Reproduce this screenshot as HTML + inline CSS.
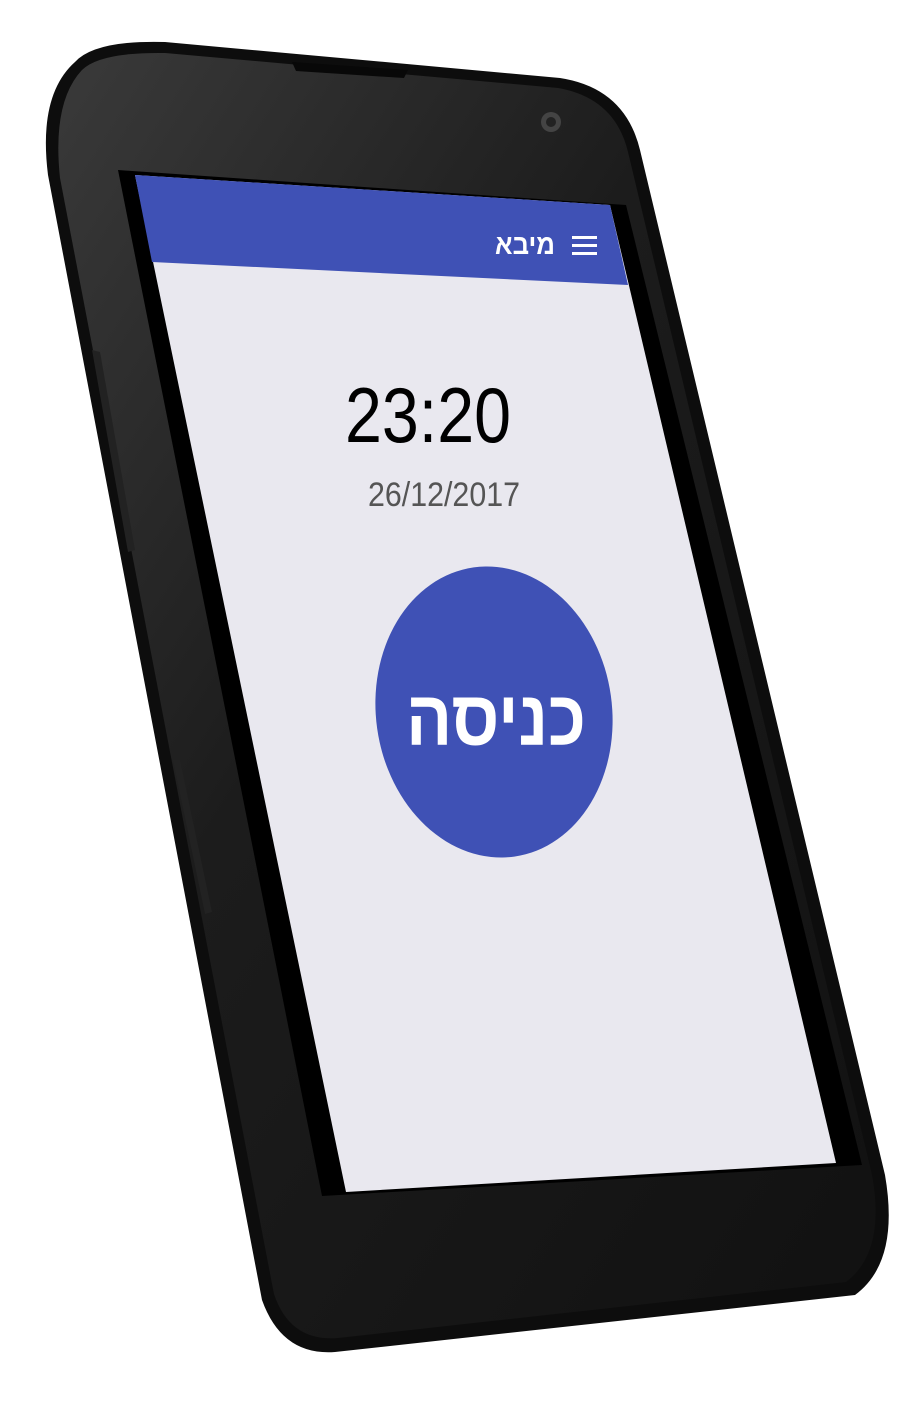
<!DOCTYPE html>
<html><head><meta charset="utf-8"><style>
html,body{margin:0;padding:0;background:#fff;}
svg{display:block}
</style></head><body>
<svg width="923" height="1412" viewBox="0 0 923 1412" xmlns="http://www.w3.org/2000/svg">
<defs>
<linearGradient id="body" x1="0" y1="0" x2="1" y2="1">
<stop offset="0" stop-color="#3a3a3a"/><stop offset="0.4" stop-color="#1c1c1c"/><stop offset="1" stop-color="#111"/>
</linearGradient>
</defs>
<path d="M75 62 Q95 40 165 42 L560 78 Q625 88 640 150 L885 1175 Q900 1262 855 1295 L335 1352 Q282 1356 262 1300 L48 175 Q38 95 75 62 Z" fill="#0d0d0d"/>
<path d="M82 70 Q100 52 165 53 L558 88 Q615 98 628 152 L872 1175 Q886 1252 846 1282 L338 1338 Q290 1342 274 1294 L60 178 Q52 102 82 70 Z" fill="url(#body)"/>
<path d="M292 62 L408 70 L404 78 L296 71 Z" fill="#080808"/>
<circle cx="551" cy="122" r="10" fill="#444"/><circle cx="551" cy="122" r="5" fill="#222"/>
<path d="M92 350 L100 352 L135 550 L128 552 Z" fill="#222"/>
<path d="M173 760 L180 760 L212 912 L205 914 Z" fill="#222"/>
<path d="M118 170 L626 205 L862 1165 L322 1196 Z" fill="#000"/>
<path d="M135 175 L610 205 L836 1163 L346 1192 Z" fill="#e9e8ef"/>
<path d="M135 175 L610 205 L628 285 L152 262 Z" fill="#3f51b5"/>
<g fill="#fff">
<rect x="572" y="236" width="25" height="3"/><rect x="572" y="244" width="25" height="3"/><rect x="572" y="252" width="25" height="3"/>
</g>
<text x="495" y="254" textLength="60" lengthAdjust="spacingAndGlyphs" font-family="Liberation Sans, DejaVu Sans, sans-serif" font-weight="bold" font-size="28" fill="#fff">מיבא</text>
<text x="345" y="442" textLength="166" lengthAdjust="spacingAndGlyphs" font-family="Liberation Sans, sans-serif" font-size="78" fill="#000">23:20</text>
<text x="368" y="506" textLength="152" lengthAdjust="spacingAndGlyphs" font-family="Liberation Sans, sans-serif" font-size="34" fill="#555">26/12/2017</text>
<ellipse cx="494" cy="712" rx="118" ry="146" transform="rotate(-8 494 712)" fill="#3f51b5"/>
<text x="406" y="745" textLength="180" lengthAdjust="spacingAndGlyphs" font-family="Liberation Sans, DejaVu Sans, sans-serif" font-weight="bold" font-size="78" fill="#fff">כניסה</text>
</svg>
</body></html>
